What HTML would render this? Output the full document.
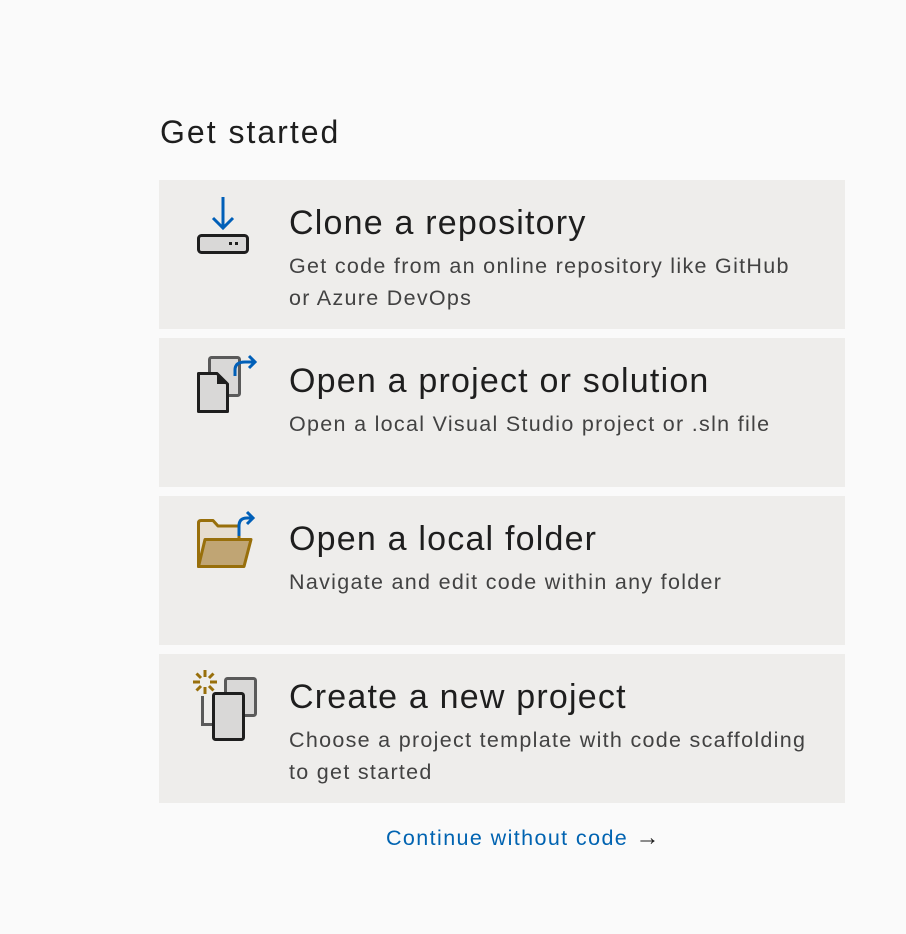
<!DOCTYPE html>
<html><head><meta charset="utf-8"><style>
html,body{margin:0;padding:0;background:#fafafa;width:906px;height:934px;overflow:hidden;font-family:"Liberation Sans",sans-serif;}
.h{position:absolute;left:160px;top:110px;font-size:32px;color:#1e1e1e;line-height:44px;letter-spacing:2px;}
.card{position:absolute;left:159px;width:686px;height:149px;background:#eeedeb;}
.card svg{position:absolute;left:0;top:0}
.t{position:absolute;left:130px;top:21px;font-size:34px;color:#1e1e1e;line-height:44px;white-space:nowrap;letter-spacing:1.2px;}
.d{position:absolute;left:130px;top:70px;font-size:21.5px;color:#424242;line-height:32px;width:520px;letter-spacing:1.3px;}
.link{position:absolute;left:386px;top:822px;font-size:21.5px;color:#0063b1;line-height:32px;white-space:nowrap;letter-spacing:1.4px;}
.link span{color:#1e1e1e;font-size:24px}
</style></head><body>
<div class="h">Get started</div>

<div class="card" style="top:180px">
<svg width="120" height="149">
<path d="M64 17 V48 M54 38 L64 48 L74 38" stroke="#005fb8" stroke-width="3" fill="none"/>
<rect x="39.5" y="55.5" width="49" height="17" rx="3" fill="#d9d8d7" stroke="#1e1e1e" stroke-width="3"/>
<rect x="70" y="62" width="3" height="3" fill="#1e1e1e"/><rect x="76" y="62" width="3" height="3" fill="#1e1e1e"/>
</svg>
<div class="t">Clone a repository</div>
<div class="d">Get code from an online repository like GitHub or Azure DevOps</div>
</div>

<div class="card" style="top:338px">
<svg width="120" height="149">
<rect x="50.5" y="19.5" width="30" height="38" rx="2" fill="#d9d8d7" stroke="#5a5a5a" stroke-width="3"/>
<path d="M39.5 35.5 H58 L68.5 46 V73.5 H39.5 Z" fill="#d9d8d7" stroke="#1e1e1e" stroke-width="3" stroke-linejoin="round"/>
<path d="M58 35.5 V46 H68.5 Z" fill="#1e1e1e"/>
<path d="M76 38 V32 Q76 24 86 24 H95 M90 18 L96 24 L90 30" stroke="#005fb8" stroke-width="3" fill="none"/>
</svg>
<div class="t">Open a project or solution</div>
<div class="d">Open a local Visual Studio project or .sln file</div>
</div>

<div class="card" style="top:496px">
<svg width="120" height="149">
<path d="M39.5 70.5 V27 Q39.5 24.5 42 24.5 H54 L59 30 H80 V70.5 Z" fill="#e6ddd0" stroke="#986f0b" stroke-width="3" stroke-linejoin="round"/>
<path d="M39.5 70.5 L46 43.5 H92 L85 70.5 Z" fill="#c0a574" stroke="#986f0b" stroke-width="3" stroke-linejoin="round"/>
<path d="M80 40 V30 Q80 22 88 22 H93 M88 16 L94 22 L88 28" stroke="#005fb8" stroke-width="3" fill="none"/>
</svg>
<div class="t">Open a local folder</div>
<div class="d">Navigate and edit code within any folder</div>
</div>

<div class="card" style="top:654px">
<svg width="120" height="149">
<rect x="66.5" y="24.5" width="30" height="37" rx="2" fill="#d9d8d7" stroke="#5a5a5a" stroke-width="3"/>
<path d="M43.5 42 V70.5 H56" stroke="#5a5a5a" stroke-width="3" fill="none"/>
<rect x="54.5" y="39.5" width="30" height="46" rx="2" fill="#d9d8d7" stroke="#1e1e1e" stroke-width="3"/>
<g stroke="#986f0b" stroke-width="3">
<path d="M46 16 V23 M46 33 V40 M34 28 H41 M51 28 H58 M37.5 19.5 L42 24 M50 32 L54.5 36.5 M54.5 19.5 L50 24 M42 32 L37.5 36.5"/>
</g>
</svg>
<div class="t">Create a new project</div>
<div class="d">Choose a project template with code scaffolding to get started</div>
</div>

<div class="link">Continue without code <span>→</span></div>
</body></html>
